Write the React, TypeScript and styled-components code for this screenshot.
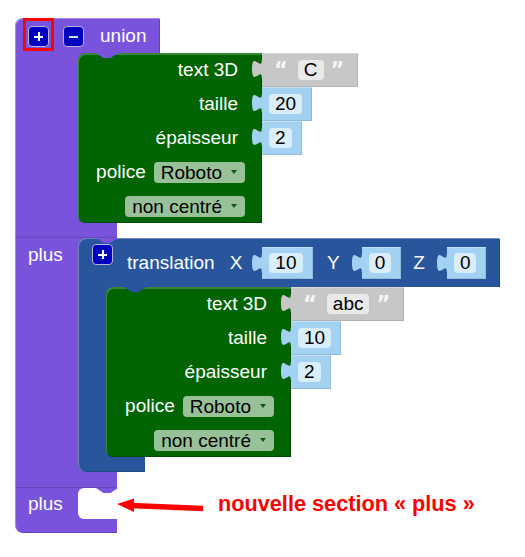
import * as React from 'react';
import styled, { createGlobalStyle, css } from 'styled-components';

const PURPLE = '#7a53dc';
const BLUE = '#29559c';
const GREEN = '#006400';
const NUMBER = '#a3d1f2';
const STRING = '#c7c7c7';
const RED = '#ff0000';

const GlobalStyle = createGlobalStyle`
  body {
    margin: 0;
    background: #ffffff;
    font-family: "Liberation Sans", Arial, sans-serif;
    font-size: 19px;
  }
`;

// notch cut in the top edge of a block plugged into a statement input
const notch = css<{ $parent?: string }>`
  &::before {
    content: '';
    display: ${props => (props.$parent ? 'block' : 'none')};
    position: absolute;
    top: 0;
    left: 18px;
    width: 22px;
    height: 5px;
    background: ${props => props.$parent};
    clip-path: polygon(0 0, 100% 0, 66% 100%, 34% 100%);
    z-index: 1;
  }
`;
//////////////////////////////////////////////////////////////////////////////////////////////////////
const Canvas = styled.div`
  width: 525px;
  height: 557px;
  box-sizing: border-box;
  padding: 18px 0 0 15px;
  overflow: hidden;
`;

const Stack = styled.div<{ $parent?: string }>`
  position: relative;
  display: flex;
  flex-direction: column;
  align-items: flex-start;
  ${notch}
`;

const Header = styled.div<{ $color: string; $width: number; $height: number; $pad: number }>`
  display: flex;
  align-items: center;
  box-sizing: border-box;
  width: ${props => props.$width}px;
  height: ${props => props.$height}px;
  padding-left: ${props => props.$pad}px;
  background: ${props => props.$color};
  border-radius: 8px 2px 0 0;
  box-shadow: inset 1px 1px 0 rgba(255, 255, 255, 0.3), inset -1px 0 0 rgba(0, 0, 0, 0.2);
`;

const HeaderLabel = styled.span<{ $gap: number }>`
  margin-left: ${props => props.$gap}px;
  color: #ffffff;
  white-space: nowrap;
`;

const ExpandButton = styled.div<{ $top: number; $gap?: number; $minus?: boolean }>`
  position: relative;
  flex: 0 0 21px;
  height: 21px;
  box-sizing: border-box;
  align-self: flex-start;
  margin-top: ${props => props.$top}px;
  margin-left: ${props => props.$gap || 0}px;
  border: 1px solid #b4b4dc;
  border-radius: 4px;
  background: #0000c0;

  &::before {
    content: '';
    position: absolute;
    left: 50%;
    top: 50%;
    width: 9px;
    height: 2px;
    margin: -1px 0 0 -4.5px;
    background: ${props => (props.$minus ? '#d8d8ec' : '#ffffff')};
  }

  &::after {
    content: '';
    display: ${props => (props.$minus ? 'none' : 'block')};
    position: absolute;
    left: 50%;
    top: 50%;
    width: 2px;
    height: 9px;
    margin: -4.5px 0 0 -1px;
    background: #ffffff;
  }
`;

const Highlight = styled.span`
  position: absolute;
  inset: -9px -6px -5px -6px;
  border: 3px solid ${RED};
`;

const BodyRow = styled.div<{ $color: string; $arm: number }>`
  display: flex;
  align-items: stretch;
  background: linear-gradient(
    to right,
    ${props => props.$color} ${props => props.$arm + 12}px,
    transparent ${props => props.$arm + 12}px
  );
`;

const Arm = styled.div<{ $color: string; $width: number; $lineHeight: number }>`
  flex: 0 0 ${props => props.$width}px;
  box-sizing: border-box;
  padding-left: 13px;
  background: ${props => props.$color};
  color: #ffffff;
  line-height: ${props => props.$lineHeight}px;
  box-shadow: inset 1px 0 0 rgba(255, 255, 255, 0.3);
`;

const Bar = styled.div<{ $color: string; $width: number; $height: number; $round?: boolean }>`
  width: ${props => props.$width}px;
  height: ${props => props.$height}px;
  background: ${props => props.$color};
  border-radius: ${props => (props.$round ? '0 0 0 8px' : '0')};
  box-shadow: inset 1px 0 0 rgba(255, 255, 255, 0.3), inset 0 -1px 0 rgba(0, 0, 0, 0.15);
`;

const StatementBlock = styled.div<{ $width: number; $parent?: string }>`
  position: relative;
  display: flex;
  flex-direction: column;
  width: ${props => props.$width}px;
  background: ${GREEN};
  border-radius: 7px 0 0 7px;
  box-shadow: inset 1px 2px 0 rgba(255, 255, 255, 0.22), inset -1px -1px 0 rgba(0, 0, 0, 0.25);
  ${notch}
`;

const InputRow = styled.div`
  display: flex;
  align-items: center;
  height: 34px;
`;

const InputLabel = styled.div<{ $width: number }>`
  flex: 0 0 ${props => props.$width}px;
  box-sizing: border-box;
  padding-right: 24px;
  text-align: right;
  color: #ffffff;
  white-space: nowrap;
`;

const DropRow = styled.div`
  display: flex;
  align-items: center;
  justify-content: flex-end;
  gap: 8px;
  height: 34px;
  padding-right: 17px;
  color: #ffffff;
  white-space: nowrap;
`;

const Dropdown = styled.div`
  display: flex;
  align-items: center;
  height: 21px;
  line-height: 21px;
  padding: 0 8px 0 7px;
  border-radius: 4px;
  background: #99c199;
  color: #000000;
`;

const DropArrow = styled.span`
  margin-left: 9px;
  width: 0;
  height: 0;
  border-left: 3px solid transparent;
  border-right: 3px solid transparent;
  border-top: 4px solid #0b5b0b;
`;

const ValueBlock = styled.div<{ $color: string; $height: number; $gap?: number; $padL: number; $padR: number }>`
  position: relative;
  display: flex;
  align-items: center;
  flex-shrink: 0;
  height: ${props => props.$height}px;
  margin-left: ${props => props.$gap || 0}px;
  padding: 0 ${props => props.$padR}px 0 ${props => props.$padL}px;
  background: ${props => props.$color};
  box-shadow: inset 0 1px 0 rgba(255, 255, 255, 0.35), inset -1px -1px 0 rgba(0, 0, 0, 0.1);
`;

const TabSvg = styled.svg`
  position: absolute;
  left: -10px;
  top: 7px;
`;

const Field = styled.span<{ $bg: string; $gap?: number }>`
  height: 20px;
  line-height: 20px;
  margin-left: ${props => props.$gap || 0}px;
  padding: 0 6px;
  border-radius: 4px;
  background: ${props => props.$bg};
  color: #000000;
  white-space: nowrap;
`;

const Quote = styled.span<{ $gap?: number }>`
  margin-left: ${props => props.$gap || 0}px;
  font-family: "DejaVu Sans", "Liberation Sans", sans-serif;
  font-weight: bold;
  font-size: 21px;
  line-height: 20px;
  color: #f6f6f6;
`;

const EmptySlot = styled.div<{ $parent?: string }>`
  position: relative;
  flex: 0 0 39px;
  height: 31px;
  background: #ffffff;
  border-radius: 6px 0 0 6px;
  ${notch}
`;

const Annotation = styled.div`
  display: flex;
  align-items: center;
`;

const Note = styled.span`
  margin-left: 15px;
  color: ${RED};
  font-weight: bold;
  font-size: 21.7px;
  line-height: 31px;
  white-space: nowrap;
`;
//////////////////////////////////////////////////////////////////////////////////////////////////////
const Tab = ({ color }: { color: string }) => (
  <TabSvg width="11" height="18" viewBox="0 0 9 15" preserveAspectRatio="none">
    <path d="M9,0 L8,0 C8,10 0,-8 0,7.5 S8,5 8,15 L9,15 Z" fill={color} />
  </TabSvg>
);

const NumberBlock = ({ value, height, gap }: { value: string; height: number; gap?: number }) => (
  <ValueBlock $color={NUMBER} $height={height} $gap={gap} $padL={7} $padR={10}>
    <Tab color={NUMBER} />
    <Field $bg="#daedfa">{value}</Field>
  </ValueBlock>
);

const StringBlock = ({ value }: { value: string }) => (
  <ValueBlock $color={STRING} $height={34} $padL={12} $padR={14}>
    <Tab color={STRING} />
    <Quote>“</Quote>
    <Field $bg="#e9e9e9" $gap={10}>
      {value}
    </Field>
    <Quote $gap={7}>”</Quote>
  </ValueBlock>
);

type Text3DProps = { text: string; size: string; thickness: string; width: number; parent: string };

const Text3DBlock = ({ text, size, thickness, width, parent }: Text3DProps) => (
  <StatementBlock $width={width} $parent={parent}>
    <InputRow>
      <InputLabel $width={width}>text 3D</InputLabel>
      <StringBlock value={text} />
    </InputRow>
    <InputRow>
      <InputLabel $width={width}>taille</InputLabel>
      <NumberBlock value={size} height={34} />
    </InputRow>
    <InputRow>
      <InputLabel $width={width}>épaisseur</InputLabel>
      <NumberBlock value={thickness} height={34} />
    </InputRow>
    <DropRow>
      police
      <Dropdown>
        Roboto
        <DropArrow />
      </Dropdown>
    </DropRow>
    <DropRow>
      <Dropdown>
        non centré
        <DropArrow />
      </Dropdown>
    </DropRow>
  </StatementBlock>
);

const TranslationBlock = () => (
  <Stack $parent={PURPLE}>
    <Header $color={BLUE} $width={422} $height={49} $pad={14}>
      <ExpandButton $top={6} />
      <HeaderLabel $gap={14}>translation</HeaderLabel>
      <HeaderLabel $gap={15}>X</HeaderLabel>
      <NumberBlock value="10" height={32} gap={20} />
      <HeaderLabel $gap={14.5}>Y</HeaderLabel>
      <NumberBlock value="0" height={32} gap={22} />
      <HeaderLabel $gap={12}>Z</HeaderLabel>
      <NumberBlock value="0" height={32} gap={22} />
    </Header>
    <BodyRow $color={BLUE} $arm={28}>
      <Arm $color={BLUE} $width={28} $lineHeight={34} />
      <Text3DBlock text="abc" size="10" thickness="2" width={185} parent={BLUE} />
    </BodyRow>
    <Bar $color={BLUE} $width={67} $height={15} $round />
  </Stack>
);

const Arrow = () => (
  <svg width="86" height="31" viewBox="0 0 86 31">
    <line x1="14" y1="17.6" x2="86" y2="20.6" stroke={RED} strokeWidth="5.5" />
    <polygon points="0,16 17,10.5 17,24" fill={RED} />
  </svg>
);
//////////////////////////////////////////////////////////////////////////////////////////////////////
export default function App() {
  return (
    <>
      <GlobalStyle />
      <Canvas>
        <Stack>
          <Header $color={PURPLE} $width={145} $height={35} $pad={13}>
            <ExpandButton $top={8}>
              <Highlight />
            </ExpandButton>
            <ExpandButton $top={8} $gap={14} $minus />
            <HeaderLabel $gap={16}>union</HeaderLabel>
          </Header>
          <BodyRow $color={PURPLE} $arm={63}>
            <Arm $color={PURPLE} $width={63} $lineHeight={34} />
            <Text3DBlock text="C" size="20" thickness="2" width={184} parent={PURPLE} />
          </BodyRow>
          <Bar $color={PURPLE} $width={102} $height={15} />
          <BodyRow $color={PURPLE} $arm={63}>
            <Arm $color={PURPLE} $width={63} $lineHeight={34}>
              plus
            </Arm>
            <TranslationBlock />
          </BodyRow>
          <Bar $color={PURPLE} $width={102} $height={16} />
          <BodyRow $color={PURPLE} $arm={63}>
            <Arm $color={PURPLE} $width={63} $lineHeight={31}>
              plus
            </Arm>
            <EmptySlot $parent={PURPLE} />
            <Annotation>
              <Arrow />
              <Note>nouvelle section « plus »</Note>
            </Annotation>
          </BodyRow>
          <Bar $color={PURPLE} $width={102} $height={14} $round />
        </Stack>
      </Canvas>
    </>
  );
}
